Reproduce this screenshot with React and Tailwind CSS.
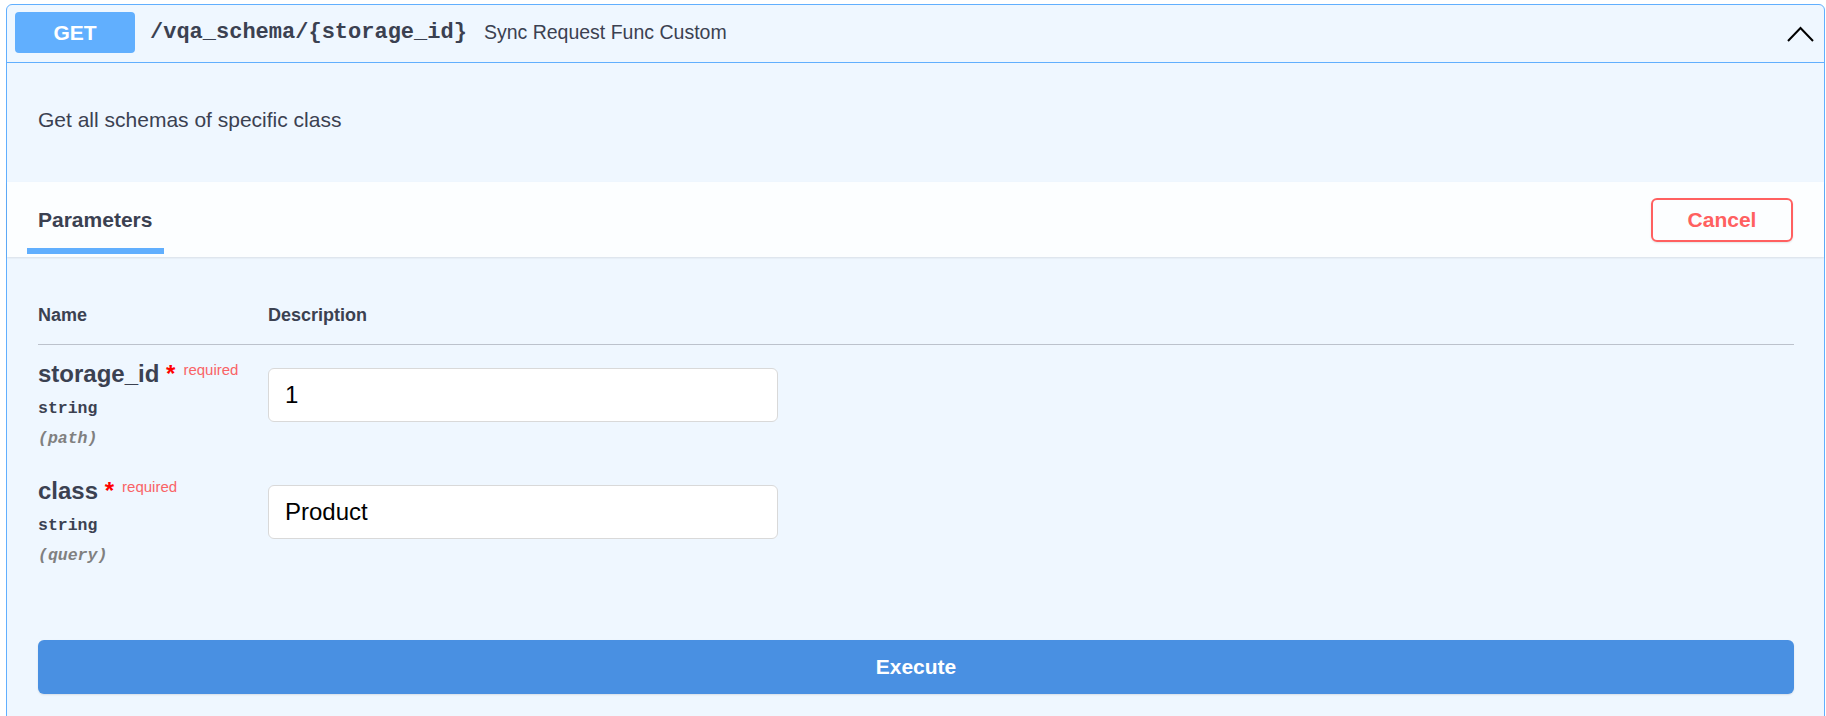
import React from 'react';

// Parámetros del endpoint mostrados en la tabla
const params = [
    { name: 'storage_id', type: 'string', location: 'path', value: '1' },
    { name: 'class', type: 'string', location: 'query', value: 'Product' },
];

function ParamRow({ param }) {
    return (
        <div className="grid grid-cols-[230px_1fr] pt-[15px] pb-[13px]">
            <div>
                <div className="text-[24px] leading-[27px] font-bold text-[#3b4151] whitespace-nowrap">
                    {param.name}
                    <span className="text-[#ff0000]">&nbsp;*</span>
                    <span className="relative top-[-7px] pl-[8px] text-[15px] font-normal text-[#f96366]">required</span>
                </div>
                <div className="mt-[9px] font-['Liberation_Mono',monospace] text-[16.5px] leading-[20px] font-bold text-[#3b4151]">
                    {param.type}
                </div>
                <div className="mt-[10px] font-['Liberation_Mono',monospace] text-[16.5px] leading-[20px] font-bold italic text-[#808080]">
                    ({param.location})
                </div>
            </div>
            <div>
                <input
                    type="text"
                    defaultValue={param.value}
                    readOnly
                    className="mt-[8px] w-[510px] h-[54px] rounded-[6px] border border-[#d9d9d9] bg-white pl-[16px] text-[24px] text-black outline-none font-['Liberation_Sans',Arial,sans-serif]"
                />
            </div>
        </div>
    );
}

export default function App() {
    return (
        <div className="h-[716px] overflow-hidden bg-white pl-[6px] pr-[1px] pt-[4px] font-['Liberation_Sans',Arial,sans-serif]">
            <div className="min-h-[760px] rounded-[6px] border border-[#61affe] bg-[#eff7ff]">
                {/* Cabecera del endpoint */}
                <div className="flex items-center border-b border-[#61affe] pl-[8px] pr-[10px] pt-[7px] pb-[9px]">
                    <div className="flex h-[41px] w-[120px] items-center justify-center rounded-[4px] bg-[#61affe] text-[21px] font-bold text-white">
                        GET
                    </div>
                    <span className="ml-[15px] font-['Liberation_Mono',monospace] text-[22px] font-bold text-[#3b4151]">
                        /vqa_schema/{'{storage_id}'}
                    </span>
                    <span className="ml-[17px] text-[19.5px] text-[#3b4151]">Sync Request Func Custom</span>
                    <svg className="ml-auto mt-[3px]" width="27" height="16" viewBox="0 0 27 16" fill="none">
                        <polyline points="1,15 13.5,2 26,15" stroke="#000" strokeWidth="2" />
                    </svg>
                </div>

                {/* Descripción */}
                <div className="h-[119px] pl-[31px] pt-[45px] text-[21px] leading-[24px] text-[#3b4151]">
                    Get all schemas of specific class
                </div>

                {/* Pestaña de parámetros */}
                <div className="flex h-[75px] items-center justify-between bg-[#fcfeff] pl-[31px] pr-[31px] shadow-[0_1px_2px_rgba(0,0,0,0.1)]">
                    <div className="relative text-[21px] leading-[24px] font-bold text-[#3b4151]">
                        Parameters
                        <div className="absolute left-[-11px] top-[40px] h-[6px] w-[137px] bg-[#61affe]" />
                    </div>
                    <button className="h-[44px] w-[142px] rounded-[6px] border-2 border-[#ff6060] bg-transparent text-[21px] font-bold text-[#ff6060] shadow-[0_1px_2px_rgba(0,0,0,0.1)]">
                        Cancel
                    </button>
                </div>

                {/* Tabla de parámetros */}
                <div className="pl-[31px] pr-[30px]">
                    <div className="grid grid-cols-[230px_1fr] border-b border-[#bcc2cc] pt-[48px] pb-[18px] text-[18px] leading-[21px] font-bold text-[#3b4151]">
                        <div>Name</div>
                        <div>Description</div>
                    </div>
                    {params.map((p) => (
                        <ParamRow key={p.name} param={p} />
                    ))}
                    <button className="mt-[61px] h-[54px] w-full rounded-[6px] bg-[#4990e2] text-[21px] font-bold text-white shadow-[0_1px_2px_rgba(0,0,0,0.1)]">
                        Execute
                    </button>
                </div>
            </div>
        </div>
    );
}
